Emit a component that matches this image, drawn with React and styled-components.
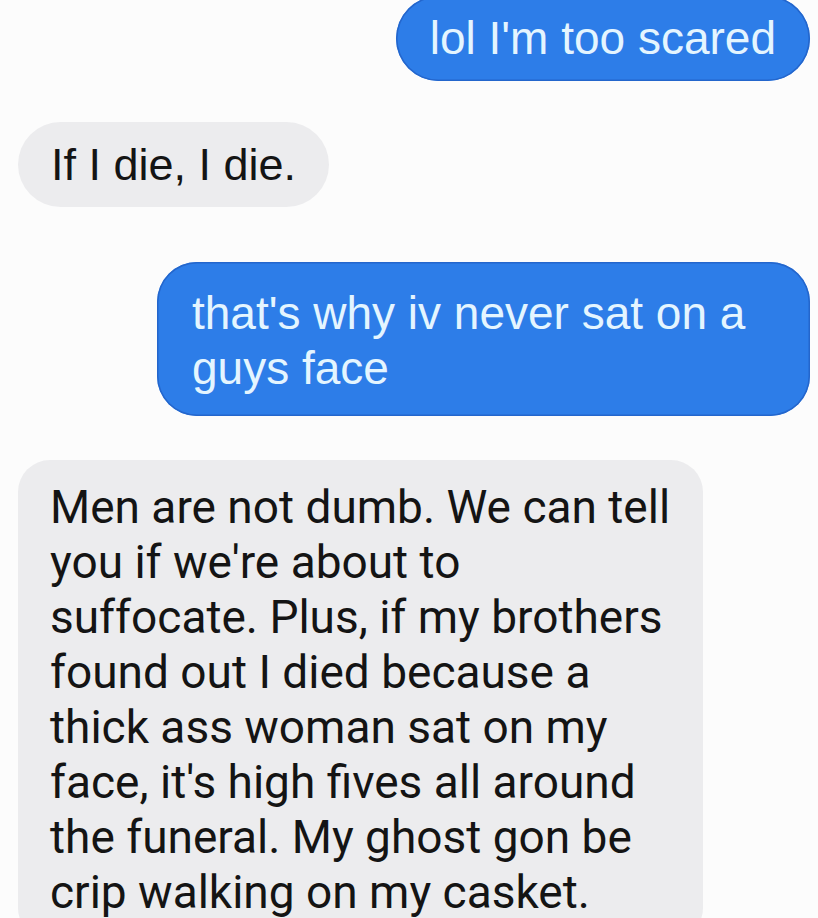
import React from "react";
import styled, { createGlobalStyle } from "styled-components";

const Global = createGlobalStyle`
  html, body {
    margin: 0;
    padding: 0;
    background: #fcfcfc;
    overflow: hidden;
  }
  #root {
    width: 818px;
    height: 918px;
    overflow: hidden;
  }
`;

const Thread = styled.div`
  display: flex;
  flex-direction: column;
  padding: 0 8px 0 18px;
  box-sizing: border-box;
  width: 818px;
`;

const Row = styled.div`
  display: flex;
  justify-content: ${(p) => (p.$out ? "flex-end" : "flex-start")};
  margin-top: ${(p) => p.$top}px;
`;

const Bubble = styled.div`
  box-sizing: border-box;
  font-size: ${(p) => p.$size || 46}px;
  line-height: 55px;
  padding: ${(p) => p.$pad};
  width: ${(p) => (p.$width ? `${p.$width}px` : "auto")};
  border-radius: ${(p) => p.$radius}px;
  -webkit-font-smoothing: antialiased;
`;

const Sent = styled(Bubble)`
  background: #2d7de8;
  color: #e4f5ff;
  font-family: "Liberation Sans", Arial, sans-serif;
  box-shadow: inset 0 0 0 1.5px #2466cc;
`;

const Received = styled(Bubble)`
  background: #ececee;
  color: #141414;
  font-family: ${(p) =>
    p.$roboto ? 'Roboto, "Liberation Sans", sans-serif' : '"Liberation Sans", Arial, sans-serif'};
`;

export default function App() {
  return (
    <>
      <Global />
      <Thread>
        <Row $out $top={-4}>
          <Sent $pad="15px 34px" $radius={44}>
            lol I'm too scared
          </Sent>
        </Row>
        <Row $top={41}>
          <Received $size={45} $pad="15px 33px" $radius={44}>
            If I die, I die.
          </Received>
        </Row>
        <Row $out $top={55}>
          <Sent $pad="24px 35px 20px" $width={653} $radius={40}>
            that's why iv never sat on a guys face
          </Sent>
        </Row>
        <Row $top={44}>
          <Received $roboto $pad="20px 32px" $width={685} $radius={32}>
            Men are not dumb. We can tell you if we're about to suffocate. Plus, if my
            brothers found out I died because a thick ass woman sat on my face, it's high
            fives all around the funeral. My ghost gon be crip walking on my casket.
          </Received>
        </Row>
      </Thread>
    </>
  );
}
